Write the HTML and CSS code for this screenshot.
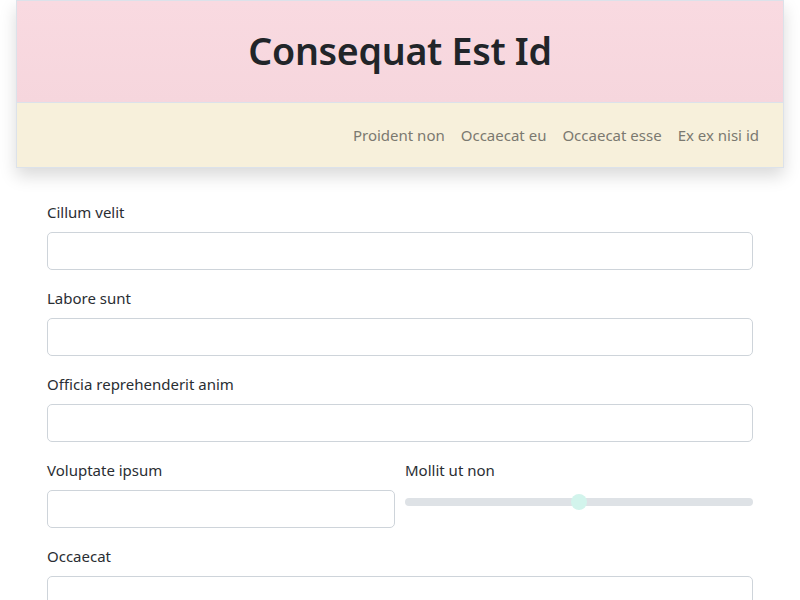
FILE: index.html
```html
<!DOCTYPE html>
<html lang="en">
<head>
<meta charset="utf-8">
<title>Consequat Est Id</title>
<link rel="stylesheet" href="styles.css">
</head>
<body>
<div class="page">
  <header class="card">
    <div class="banner">
      <h1 class="title">Consequat Est Id</h1>
    </div>
    <nav class="nav">
      <a class="nav-link" href="#">Proident non</a>
      <a class="nav-link" href="#">Occaecat eu</a>
      <a class="nav-link" href="#">Occaecat esse</a>
      <a class="nav-link" href="#">Ex ex nisi id</a>
    </nav>
  </header>
  <form class="form">
    <div class="group">
      <label class="label" for="f1">Cillum velit</label>
      <input class="control" id="f1" type="text">
    </div>
    <div class="group">
      <label class="label" for="f2">Labore sunt</label>
      <input class="control" id="f2" type="text">
    </div>
    <div class="group">
      <label class="label" for="f3">Officia reprehenderit anim</label>
      <input class="control" id="f3" type="text">
    </div>
    <div class="row">
      <div class="group">
        <label class="label" for="f4">Voluptate ipsum</label>
        <input class="control" id="f4" type="text">
      </div>
      <div class="group">
        <label class="label" for="f5">Mollit ut non</label>
        <input class="range" id="f5" type="range" min="0" max="100" value="50">
      </div>
    </div>
    <div class="group">
      <label class="label" for="f6">Occaecat</label>
      <input class="control" id="f6" type="text">
    </div>
  </form>
</div>
</body>
</html>
```
FILE: styles.css
```css
html, body {
  margin: 0;
  padding: 0;
  background: #fff;
}
body {
  font-family: "Noto Sans", "Open Sans", sans-serif;
  color: #212529;
  font-size: 16px;
  line-height: 24px;
}
.page {
  padding: 0 16px;
}
.card {
  border: 1px solid #dce2ea;
  box-shadow: 0 8px 16px rgba(0, 0, 0, 0.15);
  background: #f7f0db;
}
.banner {
  background: linear-gradient(#f9dae1, #f6d6dd);
  border-bottom: 1px solid #dce2ea;
  padding: 26px 0 27px;
  text-align: center;
}
.title {
  margin: 0;
  font-size: 37.6px;
  line-height: 48px;
  font-weight: 600;
  color: #212529;
  letter-spacing: -0.3px;
}
.nav {
  display: flex;
  justify-content: flex-end;
  padding: 12px 16px;
  background: #f7f0db;
}
.nav-link {
  display: block;
  padding: 8px 8px;
  color: #7b7970;
  text-decoration: none;
  font-size: 15px;
}
.form {
  padding: 32px 31px 0;
}
.group {
  margin-bottom: 16px;
}
.label {
  display: block;
  margin-bottom: 8px;
  font-size: 15px;
  line-height: 24px;
  color: #2a2e33;
}
.control {
  display: block;
  box-sizing: border-box;
  width: 100%;
  height: 38px;
  margin: 0;
  border: 1px solid #ced4da;
  border-radius: 5px;
  background: #fff;
  font: inherit;
  padding: 6px 12px;
}
.row {
  display: grid;
  grid-template-columns: 1fr 1fr;
  gap: 10px;
}
.range {
  display: block;
  width: 100%;
  height: 24px;
  margin: 0;
  padding: 0;
  background: transparent;
  -webkit-appearance: none;
  appearance: none;
}
.range::-webkit-slider-runnable-track {
  height: 8px;
  border-radius: 4px;
  background: #dee2e6;
}
.range::-webkit-slider-thumb {
  -webkit-appearance: none;
  appearance: none;
  width: 16px;
  height: 16px;
  margin-top: -4px;
  border: 0;
  border-radius: 50%;
  background: #d2f4ec;
}
```
